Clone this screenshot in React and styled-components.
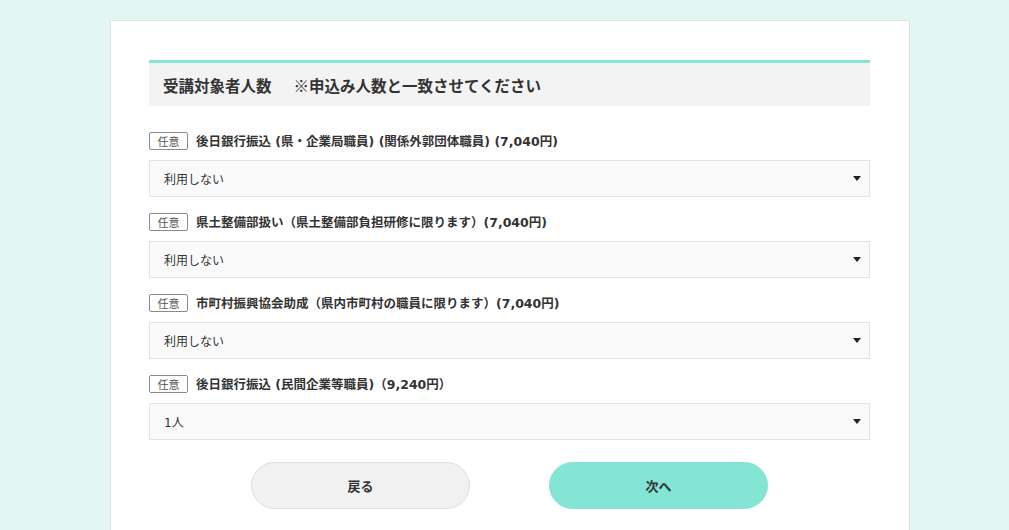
import React from "react";
import styled, { createGlobalStyle } from "styled-components";

const Global = createGlobalStyle`
  html, body { margin: 0; padding: 0; background: #e2f6f3; height: 100%; overflow: hidden; }
  body { font-family: "Noto Sans CJK JP", "Noto Sans", sans-serif; color: #333; }
`;

const Page = styled.div`
  padding: 20px 0 0 110px;
  height: 530px;
  box-sizing: border-box;
`;

const Card = styled.div`
  width: 800px;
  height: 520px;
  box-sizing: border-box;
  background: #fff;
  border: 1px solid #d8e6e4;
  border-bottom: none;
  padding: 39px 39px 0 38px;
`;

const Heading = styled.div`
  border-top: 3px solid #84e5d4;
  background: #f3f3f3;
  height: 43px;
  display: flex;
  align-items: center;
  padding-left: 14px;
  gap: 22px;
  font-size: 15.5px;
  font-weight: 700;
  color: #333;
`;

const Rows = styled.div`
  display: flex;
  flex-direction: column;
  gap: 15px;
  margin-top: 25px;
`;

const Field = styled.div`
  display: flex;
  flex-direction: column;
  gap: 10px;
`;

const LabelRow = styled.div`
  display: flex;
  align-items: center;
  gap: 8px;
  height: 19px;
`;

const Badge = styled.span`
  display: inline-flex;
  align-items: center;
  justify-content: center;
  width: 39px;
  height: 18px;
  box-sizing: border-box;
  border: 1px solid #8a8a8a;
  border-radius: 2px;
  font-size: 11px;
  color: #555;
`;

const LabelText = styled.span`
  font-family: "DejaVu Sans", "Noto Sans CJK JP", sans-serif;
  font-size: 12.5px;
  font-weight: 700;
  color: #333;
  white-space: nowrap;
`;

const Select = styled.div`
  height: 37px;
  box-sizing: border-box;
  background: #fafafa;
  border: 1px solid #e3e3e3;
  display: flex;
  align-items: center;
  justify-content: space-between;
  padding: 0 8px 0 14px;
  font-family: "DejaVu Sans", "Noto Sans CJK JP", sans-serif;
  font-size: 12px;
  color: #333;
`;

const Arrow = styled.span`
  width: 0;
  height: 0;
  border-left: 4px solid transparent;
  border-right: 4px solid transparent;
  border-top: 5px solid #222;
`;

const Buttons = styled.div`
  display: flex;
  justify-content: center;
  gap: 79px;
  margin-top: 22px;
`;

const Button = styled.button`
  width: 219px;
  height: 47px;
  border-radius: 24px;
  border: 1px solid ${(p) => (p.$primary ? "#84e5d4" : "#dedede")};
  background: ${(p) => (p.$primary ? "#84e5d4" : "#f1f1f1")};
  font-family: "Noto Sans CJK JP", sans-serif;
  font-size: 13px;
  font-weight: 700;
  color: #333;
  cursor: pointer;
`;

const fields = [
  { label: "後日銀行振込 (県・企業局職員) (関係外郭団体職員) (7,040円)", value: "利用しない" },
  { label: "県土整備部扱い（県土整備部負担研修に限ります）(7,040円)", value: "利用しない" },
  { label: "市町村振興協会助成（県内市町村の職員に限ります）(7,040円)", value: "利用しない" },
  { label: "後日銀行振込 (民間企業等職員)（9,240円）", value: "1人" },
];

export default function App() {
  return (
    <>
      <Global />
      <Page>
        <Card>
          <Heading>
            <span>受講対象者人数</span>
            <span>※申込み人数と一致させてください</span>
          </Heading>
          <Rows>
            {fields.map((f, i) => (
              <Field key={i}>
                <LabelRow>
                  <Badge>任意</Badge>
                  <LabelText>{f.label}</LabelText>
                </LabelRow>
                <Select>
                  <span>{f.value}</span>
                  <Arrow />
                </Select>
              </Field>
            ))}
          </Rows>
          <Buttons>
            <Button>戻る</Button>
            <Button $primary>次へ</Button>
          </Buttons>
        </Card>
      </Page>
    </>
  );
}
